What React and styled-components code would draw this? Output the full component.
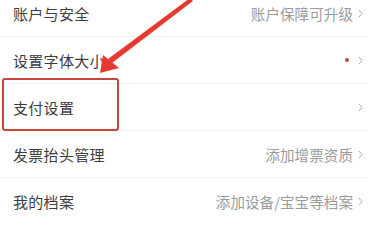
import React from "react";
import styled, { createGlobalStyle } from "styled-components";

const GlobalStyle = createGlobalStyle`
  html, body {
    margin: 0;
    padding: 0;
    background: #fff;
    overflow: hidden;
  }
  body {
    font-family: "Noto Sans CJK SC", "Noto Sans", sans-serif;
  }
`;

const items = [
  { title: "账户与安全", hint: "账户保障可升级" },
  { title: "设置字体大小", dot: true },
  { title: "支付设置" },
  { title: "发票抬头管理", hint: "添加增票资质" },
  { title: "我的档案", hint: "添加设备/宝宝等档案" },
];

const App = () => {
  return (
    <Page>
      <GlobalStyle />
      <List>
        {items.map((item) => (
          <Row key={item.title}>
            <Title>{item.title}</Title>
            <Extra>
              {item.hint && <Hint>{item.hint}</Hint>}
              {item.dot && <Dot />}
              <Chevron />
            </Extra>
          </Row>
        ))}
      </List>
      <Highlight />
      <Arrow />
    </Page>
  );
};

export default App;

const Chevron = () => (
  <ChevronSvg width="5" height="9" viewBox="0 0 5 9">
    <polyline points="1,1 4,4.5 1,8" fill="none" stroke="#a8a8a8" strokeWidth="1" />
  </ChevronSvg>
);

// 빨간 화살표 (annotation)
const Arrow = () => (
  <ArrowSvg width="200" height="80" viewBox="0 0 200 80">
    <polygon points="190,-2 193,1 112,63 108,59" fill="#e63a2e" />
    <polygon points="100,73 103,55 119,68" fill="#e63a2e" />
  </ArrowSvg>
);

const Page = styled.div`
  position: relative;
  width: 375px;
  height: 222px;
  overflow: hidden;
  background: #fff;
`;

const List = styled.ul`
  list-style: none;
  margin: -10px 7px 0 1px;
  padding: 0;
`;

const Row = styled.li`
  display: flex;
  align-items: center;
  justify-content: space-between;
  height: 46px;
  padding: 0 5px 0 12px;
  border-bottom: 1px solid #f1f1f1;
`;

const Title = styled.span`
  font-size: 15px;
  color: #3d3d3d;
  letter-spacing: 0.3px;
`;

const Extra = styled.div`
  display: flex;
  align-items: center;
  gap: 5px;
`;

const Hint = styled.span`
  font-size: 14.5px;
  color: #9b9b9b;
  letter-spacing: 0.1px;
`;

const Dot = styled.span`
  width: 4px;
  height: 4px;
  border-radius: 50%;
  background: #b5514d;
  margin-right: 4px;
`;

const ChevronSvg = styled.svg`
  display: block;
`;

const Highlight = styled.div`
  position: absolute;
  left: 2px;
  top: 78px;
  width: 113px;
  height: 49px;
  border: 2px solid #c9443b;
  border-radius: 3px;
`;

const ArrowSvg = styled.svg`
  position: absolute;
  left: 0;
  top: 0;
  overflow: visible;
`;
